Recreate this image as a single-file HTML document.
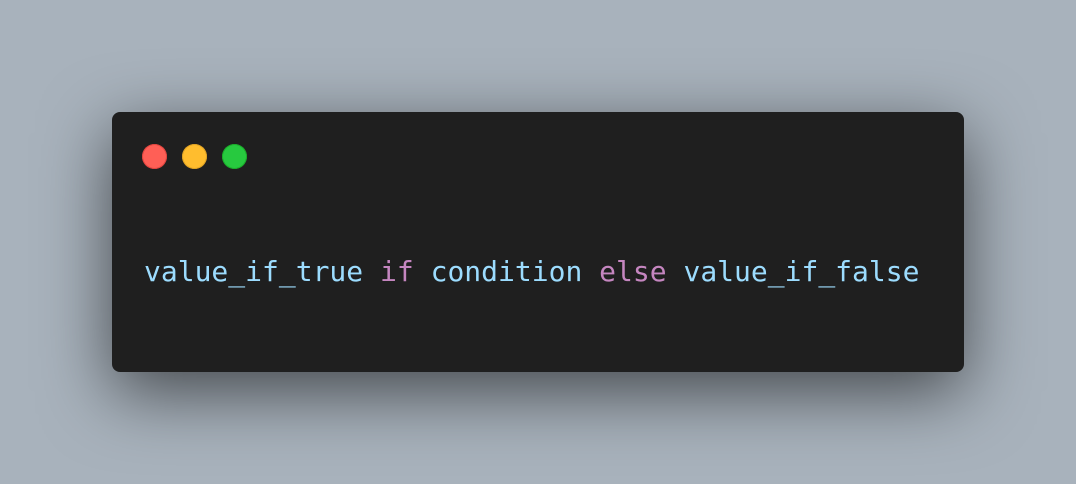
<!DOCTYPE html>
<html><head><meta charset="utf-8"><style>
html,body{margin:0;padding:0;width:1076px;height:484px;overflow:hidden;background:#a8b2bc;}
.win{position:absolute;left:112px;top:112px;width:852px;height:260px;background:#1f1f1f;border-radius:8px;
box-shadow:0 20px 70px rgba(0,0,0,0.6);}
.d{position:absolute;top:32px;width:25px;height:25px;border-radius:50%;}
.code{position:absolute;left:32px;top:146px;font-family:"DejaVu Sans Mono","Liberation Mono",monospace;font-size:28px;line-height:28px;color:#9cdcfe;white-space:pre;}
.k{color:#c586c0;}
</style></head><body>
<div class="win">
<div class="d" style="left:29.5px;background:#ff5f56;box-shadow:inset 0 0 0 1px #e0443e"></div>
<div class="d" style="left:69.5px;background:#ffbd2e;box-shadow:inset 0 0 0 1px #dea123"></div>
<div class="d" style="left:109.5px;background:#27c93f;box-shadow:inset 0 0 0 1px #1aab29"></div>
<div class="code">value_if_true <span class="k">if</span> condition <span class="k">else</span> value_if_false</div>
</div>
</body></html>
